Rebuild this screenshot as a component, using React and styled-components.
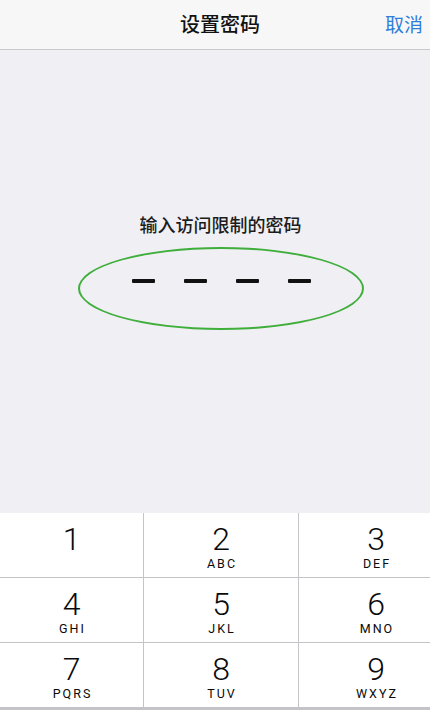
import React from "react";
import styled, { createGlobalStyle } from "styled-components";

const Global = createGlobalStyle`
  html, body { margin: 0; padding: 0; background: #efeff4; }
  body { font-family: Roboto, "Noto Sans CJK SC", sans-serif; }
  * { box-sizing: border-box; }
`;

const Screen = styled.div`
  width: 430px;
  height: 710px;
  overflow: hidden;
  display: flex;
  flex-direction: column;
  background: #efeff4;
`;

const NavBar = styled.header`
  height: 50px;
  flex: none;
  display: grid;
  grid-template-columns: 1fr auto 1fr;
  align-items: center;
  background: #f7f7f8;
  border-bottom: 1px solid #c9c9cd;
  padding: 0 7px 2px 7px;
`;

const Title = styled.h1`
  grid-column: 2;
  margin: 0 0 0 10px;
  font-family: "Noto Sans CJK SC", sans-serif;
  font-size: 20px;
  font-weight: 500;
  color: #111;
  line-height: 1;
`;

const NavButton = styled.button`
  justify-self: end;
  border: none;
  background: none;
  padding: 0;
  font-family: "Noto Sans CJK SC", sans-serif;
  font-size: 19px;
  font-weight: 400;
  color: #2f7ed8;
  line-height: 1;
`;

const Content = styled.main`
  flex: 1;
  display: flex;
  flex-direction: column;
  align-items: center;
  padding: 162px 0 0 11px;
`;

const Prompt = styled.p`
  margin: 0;
  font-family: "Noto Sans CJK SC", sans-serif;
  font-size: 18px;
  font-weight: 500;
  color: #1c1c1c;
  line-height: 24px;
`;

const Oval = styled.div`
  margin-top: 11px;
  width: 286px;
  height: 83px;
  border: 2px solid #3fae3a;
  border-radius: 50%;
  display: flex;
  justify-content: center;
  align-items: flex-start;
  gap: 29px;
  padding: 30px 0 0 2px;
`;

const Dash = styled.span`
  width: 23px;
  height: 4px;
  background: #111;
  border-radius: 1px;
`;

const Keypad = styled.section`
  flex: none;
  display: grid;
  grid-template-columns: 143px 154px 154px;
  grid-auto-rows: 64px;
  gap: 1px;
  background: #c4c4c8;
  height: 197px;
`;

const Key = styled.button`
  border: none;
  margin: 0;
  background: #fff;
  display: flex;
  flex-direction: column;
  align-items: center;
  padding: 10px 0 0;
  color: #0a0a0a;
`;

const Digit = styled.span`
  font-family: Roboto, "Liberation Sans", sans-serif;
  font-size: 32px;
  font-weight: 300;
  line-height: 32px;
`;

const Letters = styled.span`
  margin-top: 2px;
  height: 13px;
  font-family: Roboto, "Liberation Sans", sans-serif;
  font-size: 12.5px;
  font-weight: 400;
  letter-spacing: 2px;
  line-height: 13px;
  padding-left: 2px;
`;

const keys = [
  ["1", ""],
  ["2", "ABC"],
  ["3", "DEF"],
  ["4", "GHI"],
  ["5", "JKL"],
  ["6", "MNO"],
  ["7", "PQRS"],
  ["8", "TUV"],
  ["9", "WXYZ"],
];

export default function App() {
  return (
    <Screen>
      <Global />
      <NavBar>
        <Title>设置密码</Title>
        <NavButton>取消</NavButton>
      </NavBar>
      <Content>
        <Prompt>输入访问限制的密码</Prompt>
        <Oval>
          <Dash />
          <Dash />
          <Dash />
          <Dash />
        </Oval>
      </Content>
      <Keypad>
        {keys.map(([d, l]) => (
          <Key key={d}>
            <Digit>{d}</Digit>
            <Letters>{l}</Letters>
          </Key>
        ))}
      </Keypad>
    </Screen>
  );
}
